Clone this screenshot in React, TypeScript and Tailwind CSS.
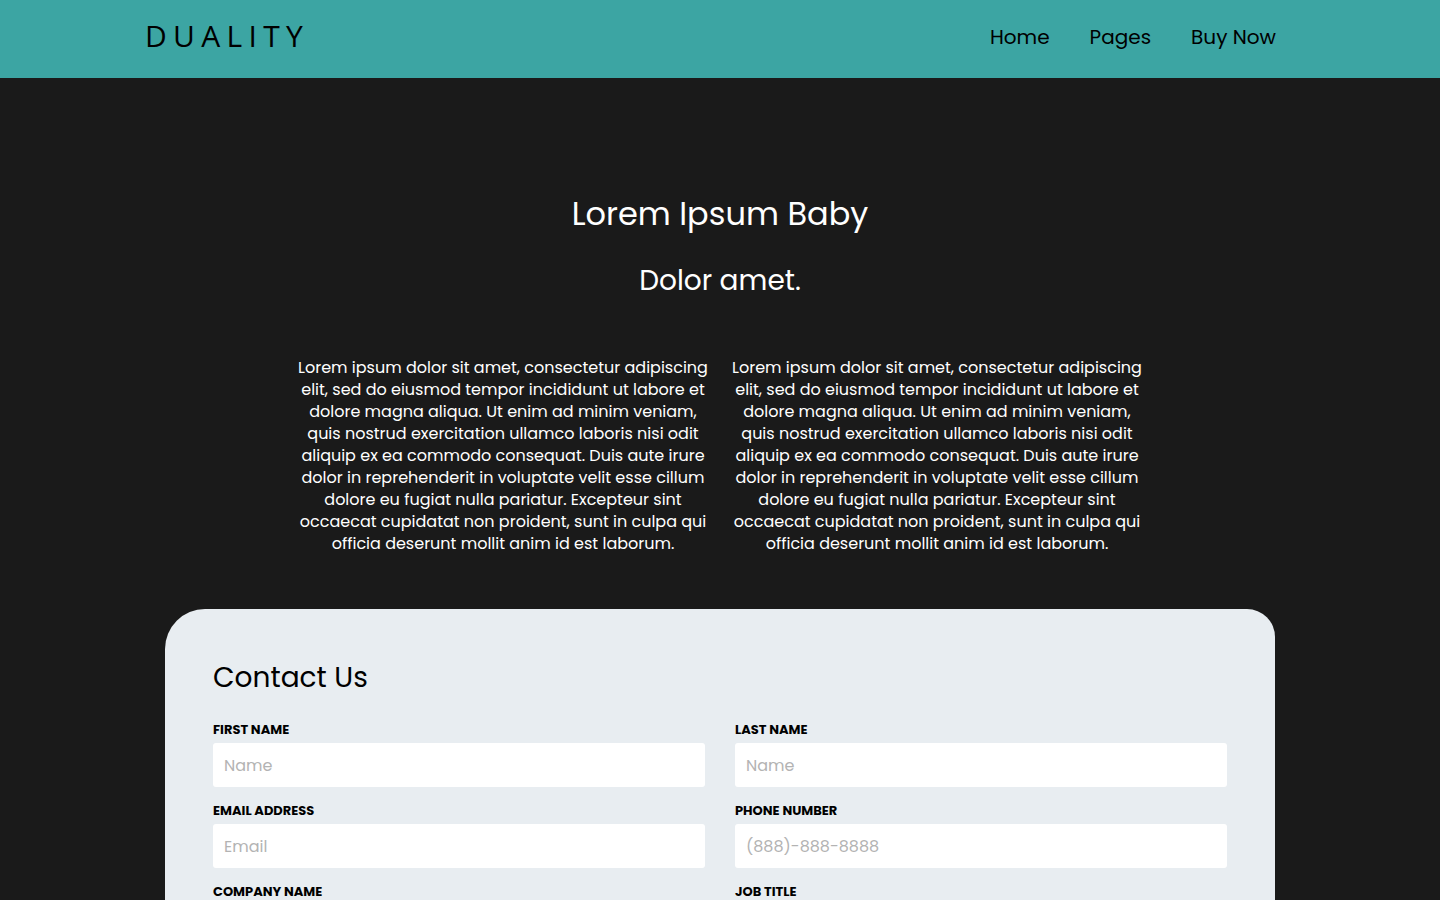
const navLinks = ["Home", "Pages", "Buy Now"];

const lorem =
  "Lorem ipsum dolor sit amet, consectetur adipiscing elit, sed do eiusmod tempor incididunt ut labore et dolore magna aliqua. Ut enim ad minim veniam, quis nostrud exercitation ullamco laboris nisi odit aliquip ex ea commodo consequat. Duis aute irure dolor in reprehenderit in voluptate velit esse cillum dolore eu fugiat nulla pariatur. Excepteur sint occaecat cupidatat non proident, sunt in culpa qui officia deserunt mollit anim id est laborum.";

const fields = [
  { id: 1, label: "First Name", placeholder: "Name" },
  { id: 2, label: "Last Name", placeholder: "Name" },
  { id: 3, label: "Email Address", placeholder: "Email" },
  { id: 4, label: "Phone Number", placeholder: "(888)-888-8888" },
  { id: 5, label: "Company Name", placeholder: "Company" },
  { id: 6, label: "Job Title", placeholder: "Title" },
];

const App = () => {
  return (
    <div className="min-h-screen bg-[#1a1a1a] font-['Poppins','DejaVu_Sans',sans-serif]">
      <header className="h-[78px] bg-[#3ca5a3] flex items-center justify-between pl-[145px] pr-[164px] pb-[4px]">
        <div className="font-['Open_Sans',sans-serif] text-[30px] tracking-[0.21em] text-black leading-none -mt-[2px]">
          DUALITY
        </div>
        <nav className="flex gap-[40px]">
          {navLinks.map((link) => (
            <a key={link} href="#" className="text-[20px] text-black">
              {link}
            </a>
          ))}
        </nav>
      </header>

      <section className="pt-[113px] text-white text-center">
        <h1 className="text-[32px] leading-[46px]">Lorem Ipsum Baby</h1>
        <h2 className="text-[28px] leading-[40px] mt-[24px]">Dolor amet.</h2>

        <div className="flex justify-center gap-[14px] mt-[56px]">
          <p className="w-[420px] text-[16px] leading-[22px]">{lorem}</p>
          <p className="w-[420px] text-[16px] leading-[22px]">{lorem}</p>
        </div>
      </section>

      <div className="flex justify-center mt-[54px]">
        <div className="w-[1110px] bg-[#e8edf1] rounded-tl-[40px] rounded-tr-[28px] px-[48px] pt-[48px] pb-[48px]">
          <h3 className="text-[28px] leading-[42px] text-black">Contact Us</h3>
          <div className="grid grid-cols-2 gap-x-[30px] gap-y-[16px] mt-[23px]">
            {fields.map((f) => (
              <label key={f.id} className="flex flex-col">
                <span className="text-[13px] leading-[16px] font-bold uppercase text-black mb-[5px]">
                  {f.label}
                </span>
                <input
                  type="text"
                  placeholder={f.placeholder}
                  className="h-[44px] bg-white rounded-[3px] px-[11px] text-[16px] placeholder:text-[#b3b3b3] outline-none"
                />
              </label>
            ))}
          </div>
        </div>
      </div>
    </div>
  );
};

export default App;
